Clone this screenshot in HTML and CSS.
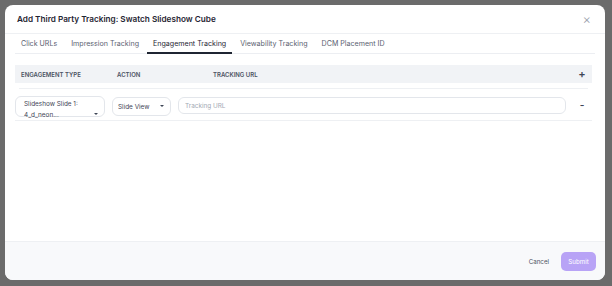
FILE: index.html
```html
<!DOCTYPE html>
<html lang="en">
<head>
    <meta charset="UTF-8">
    <title>Add Third Party Tracking</title>
    <link rel="stylesheet" href="styles.css">
</head>
<body>
    <div class="overlay">
        <div class="modal">
            <div class="modal-header">
                <h2>Add Third Party Tracking: Swatch Slideshow Cube</h2>
                <span class="close">&times;</span>
            </div>
            <div class="tabs">
                <div class="tab">Click URLs</div>
                <div class="tab">Impression Tracking</div>
                <div class="tab active">Engagement Tracking</div>
                <div class="tab">Viewability Tracking</div>
                <div class="tab">DCM Placement ID</div>
            </div>
            <div class="modal-body">
                <div class="table-head">
                    <div class="head-type">Engagement Type</div>
                    <div class="head-action">Action</div>
                    <div class="head-url">Tracking URL</div>
                    <div class="col-btn">+</div>
                </div>
                <div class="table-row">
                    <div class="col-type">
                        <div class="select select-tall">
                            <span>Slideshow Slide 1:<br>4_d_neon...</span>
                            <i class="caret"></i>
                        </div>
                    </div>
                    <div class="col-action">
                        <div class="select">
                            <span>Slide View</span>
                            <i class="caret"></i>
                        </div>
                    </div>
                    <div class="col-url">
                        <input type="text" placeholder="Tracking URL">
                    </div>
                    <div class="col-btn minus">-</div>
                </div>
            </div>
            <div class="modal-footer">
                <button class="btn-cancel">Cancel</button>
                <button class="btn-submit">Submit</button>
            </div>
        </div>
    </div>
</body>
</html>
```

FILE: styles.css
```css
body {
    margin: 0;
    font-family: Inter, "Noto Sans", sans-serif;
    background-color: #6b6b6b;
    width: 612px;
    height: 286px;
    overflow: hidden;
}

.overlay {
    padding: 5px 7px 6px 5px;
    height: 275px;
}

.modal {
    background-color: #fff;
    border-radius: 8px;
    height: 100%;
    display: flex;
    flex-direction: column;
    overflow: hidden;
}

.modal-header {
    height: 28px;
    display: flex;
    align-items: center;
    justify-content: space-between;
    padding: 0 14px 0 12px;
    border-bottom: 1px solid #eef0f3;
}

.modal-header h2 {
    margin: 0;
    font-size: 8.2px;
    font-weight: 600;
    color: #1f2532;
}

.close {
    color: #9aa1ad;
    font-size: 13px;
    font-weight: 300;
    line-height: 1;
}

.tabs {
    display: flex;
    gap: 2px;
    margin: 0 10px;
    height: 19px;
    border-bottom: 1px solid #eceef2;
}

.tab {
    padding: 0 6px;
    font-size: 7.1px;
    color: #5b6271;
    display: flex;
    align-items: center;
    border-bottom: 2px solid transparent;
    margin-bottom: -1px;
}

.tab.active {
    color: #1f2532;
    border-bottom-color: #1f2532;
}

.modal-body {
    flex: 1;
    padding: 11px 13px 0 10px;
}

.table-head,
.table-row {
    display: flex;
}

.table-head {
    align-items: center;
    height: 18px;
    background-color: #f1f3f6;
    font-size: 6px;
    font-weight: 600;
    text-transform: uppercase;
    color: #4b5262;
    border-bottom: 5px solid #fff;
    box-shadow: 0 5px 0 -4px #eef0f3;
}

.head-type,
.head-action,
.head-url {
    padding-left: 6px;
    box-sizing: border-box;
}

.head-type {
    width: 96px;
}

.head-action {
    width: 96px;
}

.head-url {
    flex: 1;
}

.col-type {
    width: 97px;
}

.col-action {
    width: 66px;
    padding-top: 1px;
}

.col-url {
    flex: 1;
    padding-top: 1px;
}

.col-btn {
    width: 20px;
    text-align: center;
    font-size: 11px;
    color: #3f4656;
    font-weight: 600;
}

.table-row {
    align-items: flex-start;
    padding: 8px 0 3px;
    border-bottom: 1px solid #eef0f3;
}

.table-row .col-type,
.table-row .col-action {
    padding-right: 7px;
    box-sizing: border-box;
}

.select {
    position: relative;
    height: 17px;
    border: 1px solid #e3e6eb;
    border-radius: 6px;
    font-size: 6.4px;
    color: #3f4656;
    display: flex;
    align-items: center;
    padding-left: 5px;
}

.select-tall {
    height: 19px;
}

.select-tall span {
    margin-top: 7px;
    line-height: 11px;
    padding-left: 3px;
}

.caret {
    position: absolute;
    right: 6px;
    top: 7px;
    border-left: 2px solid transparent;
    border-right: 2px solid transparent;
    border-top: 2.5px solid #3f4656;
}

.select-tall .caret {
    top: 16px;
    right: 6px;
}

.col-url input {
    display: block;
    width: 100%;
    box-sizing: border-box;
    height: 17px;
    border: 1px solid #e3e6eb;
    border-radius: 6px;
    font-family: inherit;
    font-size: 6.4px;
    padding: 0 6px;
    margin: 0;
    outline: none;
}

.col-url input::placeholder {
    color: #a3a9b4;
}

.minus {
    font-size: 10px;
    line-height: 19px;
    margin-left: 6px;
}

.table-head .col-btn {
    margin-left: 6px;
}

.modal-footer {
    height: 38px;
    background-color: #f8f9fb;
    border-top: 1px solid #eef0f3;
    display: flex;
    align-items: center;
    justify-content: flex-end;
    gap: 12px;
    padding-right: 9px;
}

.modal-footer button {
    font-family: inherit;
    font-size: 6.2px;
    border: none;
    padding: 0;
    cursor: pointer;
}

.btn-cancel {
    background: none;
    color: #4b5262;
}

.btn-submit {
    background-color: #b8a3f6;
    color: #fff;
    border-radius: 5px;
    height: 19px;
    width: 35px;
}
```
